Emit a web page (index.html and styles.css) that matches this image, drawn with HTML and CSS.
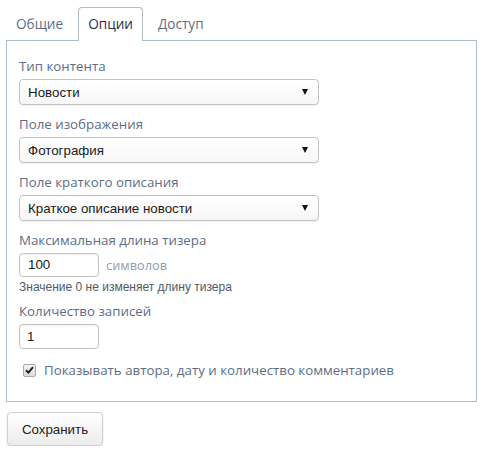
FILE: index.html
```html
<!DOCTYPE html>
<html lang="ru">
<head>
<meta charset="utf-8">
<title>Опции</title>
<link rel="stylesheet" href="styles.css">
</head>
<body>
<div class="wrap">
  <div class="tabs">
    <div class="tab">Общие</div>
    <div class="tab active">Опции</div>
    <div class="tab">Доступ</div>
  </div>
  <div class="panel">
    <div class="group">
      <div class="label">Тип контента</div>
      <div class="select"><span class="val">Новости</span><span class="arrow"></span></div>
    </div>
    <div class="group">
      <div class="label">Поле изображения</div>
      <div class="select"><span class="val">Фотография</span><span class="arrow"></span></div>
    </div>
    <div class="group">
      <div class="label">Поле краткого описания</div>
      <div class="select"><span class="val">Краткое описание новости</span><span class="arrow"></span></div>
    </div>
    <div class="group tight">
      <div class="label">Максимальная длина тизера</div>
      <div class="inline">
        <div class="input">100</div>
        <span class="unit">символов</span>
      </div>
      <div class="help">Значение 0 не изменяет длину тизера</div>
    </div>
    <div class="group last">
      <div class="label">Количество записей</div>
      <div class="input">1</div>
    </div>
    <div class="check-row">
      <span class="checkbox"><svg width="9" height="8" viewBox="0 0 9 8"><path d="M1 4.2 L3.4 6.6 L8 1.2" fill="none" stroke="#222" stroke-width="2"/></svg></span>
      <span class="check-label">Показывать автора, дату и количество комментариев</span>
    </div>
  </div>
  <div class="btn">Сохранить</div>
</div>
</body>
</html>
```
FILE: styles.css
```css
html, body {
  margin: 0;
  padding: 0;
  background: #ffffff;
}
body {
  font-family: "Open Sans", "Liberation Sans", sans-serif;
}
.wrap {
  margin-left: 6px;
  width: 471px;
}
.tabs {
  display: flex;
  align-items: flex-end;
  height: 40px;
  border-bottom: 1px solid #afbdc6;
}
.tab {
  box-sizing: border-box;
  height: 33px;
  line-height: 32px;
  padding: 0 9px;
  margin-right: 5px;
  border: 1px solid transparent;
  border-bottom: none;
  font-size: 13.6px;
  color: #5d6d86;
}
.tab.active {
  color: #23304a;
  background: #ffffff;
  border-color: #afbdc6;
  border-radius: 4px 4px 0 0;
  height: 34px;
  margin-bottom: -1px;
}
.panel {
  border: 1px solid #afbdc6;
  border-top: none;
  padding: 15px 12px 21px 12px;
}
.group {
  margin-bottom: 9px;
}
.group.tight {
  margin-bottom: 7px;
}
.label {
  font-size: 13.3px;
  line-height: 20px;
  color: #5d6d86;
  margin-bottom: 3px;
}
.select {
  box-sizing: border-box;
  width: 300px;
  height: 26px;
  border: 1px solid #c3c3c3;
  border-radius: 4px;
  background: linear-gradient(#ffffff, #f7f7f7);
  box-shadow: 0 1px 1px rgba(0,0,0,0.06);
  display: flex;
  align-items: center;
  justify-content: space-between;
  padding: 0 8px 0 8px;
  font-family: "Liberation Sans", Arial, sans-serif;
  font-size: 13.33px;
  color: #1a1a1a;
}
.arrow {
  width: 0;
  height: 0;
  border-left: 3.5px solid transparent;
  border-right: 3.5px solid transparent;
  border-top: 6px solid #111;
  margin-right: 2px;
}
.inline {
  display: flex;
  align-items: center;
  gap: 7px;
}
.input {
  box-sizing: border-box;
  width: 80px;
  height: 24px;
  border: 1px solid #c3c3c3;
  border-radius: 4px;
  box-shadow: inset 0 1px 2px rgba(0,0,0,0.06);
  padding: 0 8px;
  line-height: 22px;
  font-family: "Liberation Sans", Arial, sans-serif;
  font-size: 13.33px;
  color: #1a1a1a;
}
.group.last .input {
  height: 25px;
  line-height: 23px;
  padding-left: 7px;
}
.unit {
  font-size: 12.8px;
  color: #8f9cab;
}
.help {
  margin-top: 3px;
  font-family: "Liberation Sans", Arial, sans-serif;
  font-size: 12px;
  line-height: 14px;
  color: #4e5a66;
}
.group.last {
  margin-bottom: 11px;
}
.check-row {
  display: flex;
  align-items: center;
  height: 20px;
  padding-left: 4px;
}
.checkbox {
  box-sizing: border-box;
  width: 13px;
  height: 13px;
  border: 1px solid #a9a9a9;
  border-radius: 2px;
  background: linear-gradient(#f3f3f3, #dcdcdc);
  display: flex;
  align-items: center;
  justify-content: center;
  margin-right: 8px;
}
.check-label {
  font-size: 13.3px;
  color: #5d6d86;
  line-height: 20px;
}
.btn {
  box-sizing: border-box;
  margin: 10px 0 0 1px;
  width: 96px;
  height: 34px;
  border: 1px solid #cfcfcf;
  border-radius: 4px;
  background: linear-gradient(#ffffff, #ececec);
  box-shadow: 0 1px 2px rgba(0,0,0,0.12);
  display: flex;
  align-items: center;
  justify-content: center;
  font-family: "Liberation Sans", Arial, sans-serif;
  font-size: 13.33px;
  color: #222;
}
```
